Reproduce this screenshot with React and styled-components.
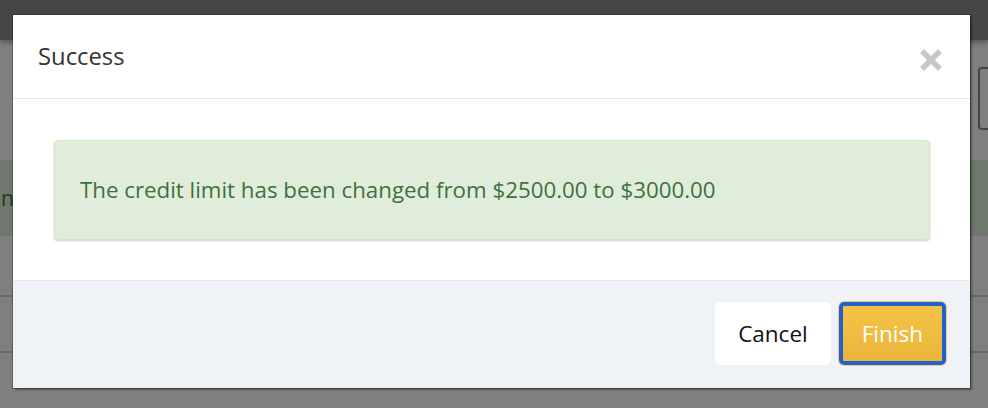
import styled, { createGlobalStyle } from "styled-components"

const GlobalStyle = createGlobalStyle`
  html, body {
    margin: 0;
    padding: 0;
    background: #ffffff;
    font-family: "Open Sans", "Liberation Sans", sans-serif;
  }
  * { box-sizing: border-box; }
`

const Page = styled.div`
  width: 988px;
  height: 408px;
  overflow: hidden;
  position: relative;
  background: #ffffff;
`

const NavBar = styled.div`
  height: 40px;
  background: #8c8c8c;
  box-shadow: 0 2px 6px rgba(0, 0, 0, 0.4);
`

const Toolbar = styled.div`
  display: flex;
  justify-content: flex-end;
  padding-top: 27px;
  height: 120px;
`

const GhostButton = styled.div`
  width: 40px;
  height: 63px;
  margin-right: -30px;
  border: 2px solid #888;
  border-radius: 4px;
`

const Banner = styled.div`
  height: 76px;
  background: #dff0d8;
  color: #3c763d;
  font-size: 21px;
  display: flex;
  align-items: center;
  padding-left: 1px;
`

const TableRow = styled.div`
  height: ${(p) => p.h}px;
  border-bottom: 2px solid #cccccc;
`

const Backdrop = styled.div`
  position: absolute;
  inset: 0;
  background: rgba(0, 0, 0, 0.5);
`

const Modal = styled.div`
  position: absolute;
  left: 13px;
  top: 15px;
  width: 957px;
  height: 373px;
  background: #ffffff;
  display: flex;
  flex-direction: column;
  box-shadow: 0 0 0 1px rgba(0, 0, 0, 0.25), 2px 2px 2px rgba(0, 0, 0, 0.35);
`

const Header = styled.div`
  height: 84px;
  display: flex;
  align-items: center;
  justify-content: space-between;
  padding: 0 27px 0 25px;
  border-bottom: 1px solid #e5e5e5;
`

const Title = styled.h4`
  margin: 0;
  font-size: 23.8px;
  font-weight: 400;
  color: #333333;
  position: relative;
  top: -1px;
`

const CloseButton = styled.button`
  border: none;
  background: none;
  padding: 0;
  width: 24px;
  height: 24px;
  cursor: pointer;
  display: flex;
  position: relative;
  top: 3px;
`

const Body = styled.div`
  padding: 41px 40px 40px 41px;
`

const Alert = styled.div`
  height: 100px;
  display: flex;
  align-items: center;
  padding: 0 25px 2px;
  background: #e1eddb;
  border: 1px solid #d3e6c6;
  border-radius: 4px;
  box-shadow: 0 1px 2px rgba(0, 0, 0, 0.2);
  color: #3f7040;
  font-size: 22.3px;
`

const Footer = styled.div`
  flex: 1;
  display: flex;
  justify-content: flex-end;
  align-items: flex-start;
  gap: 8px;
  padding: 21px 24px 0 0;
  background: #eff2f7;
  border-top: 1px solid #e2e6ec;
`

const Button = styled.button`
  height: 63px;
  padding: 0 ${(p) => p.px}px;
  font-family: "Open Sans", "Liberation Sans", sans-serif;
  font-size: 22.5px;
  border-radius: 5px;
  cursor: pointer;
  ${(p) =>
    p.primary
      ? `
    color: #ffffff;
    border: 4px solid #2162cc;
    background: linear-gradient(#f5c447, #ebb43a);
    box-shadow: 0 0 0 1px #f6c889;
  `
      : `
    color: #111111;
    border: none;
    background: #ffffff;
  `}
`

function CloseIcon() {
  return (
    <svg width="24" height="24" viewBox="0 0 24 24">
      <path d="M3 3 L21 21 M21 3 L3 21" stroke="#c6c6c6" strokeWidth="5.5" strokeLinecap="butt" />
    </svg>
  )
}

export default function App() {
  return (
    <Page>
      <GlobalStyle />
      <NavBar />
      <Toolbar>
        <GhostButton />
      </Toolbar>
      <Banner>n</Banner>
      <TableRow h={61} />
      <TableRow h={56} />
      <Backdrop />
      <Modal role="dialog">
        <Header>
          <Title>Success</Title>
          <CloseButton aria-label="Close">
            <CloseIcon />
          </CloseButton>
        </Header>
        <Body>
          <Alert>The credit limit has been changed from $2500.00 to $3000.00</Alert>
        </Body>
        <Footer>
          <Button px={23}>Cancel</Button>
          <Button primary px={19}>
            Finish
          </Button>
        </Footer>
      </Modal>
    </Page>
  )
}
